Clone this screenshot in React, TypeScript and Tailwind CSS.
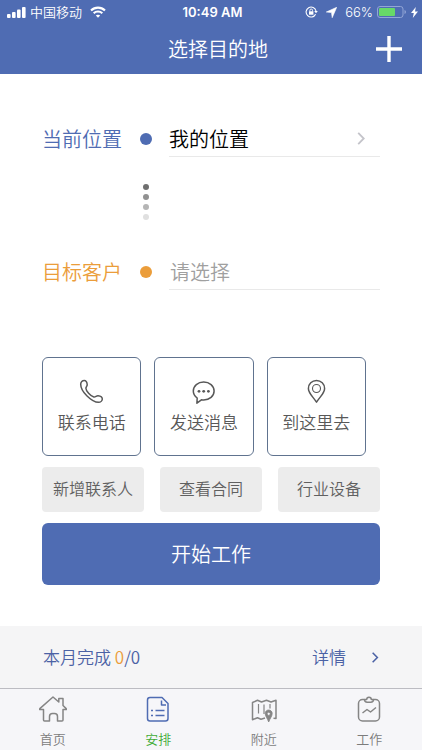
import React from "react";

function StatusBar() {
  return (
    <div className="grid h-6 grid-cols-[1fr_auto_1fr] items-center pl-[7px] pr-1 font-['Inter','Noto_Sans_CJK_SC',sans-serif] text-[13px] leading-6">
      <div className="flex items-center">
        <svg className="mr-1 h-3 w-[19px]" viewBox="0 0 19 12" fill="currentColor" aria-hidden="true">
          <rect x="0" y="8" width="3.6" height="4" rx="1" />
          <rect x="5" y="6" width="3.6" height="6" rx="1" />
          <rect x="10" y="3.5" width="3.6" height="8.5" rx="1" />
          <rect x="15" y="1" width="3.6" height="11" rx="1" />
        </svg>
        <span className="font-[350]">中国移动</span>
        <svg className="ml-2 h-3 w-4" viewBox="0 0 16 12" fill="none" stroke="currentColor" strokeWidth="2.1" aria-hidden="true">
          <path d="M1 4.6C5 .6 11 .6 15 4.6" />
          <path d="M3.7 7.3c2.4-2.4 6.2-2.4 8.6 0" />
          <path d="M5.8 9.6L8 11.8l2.2-2.2c-1.200-1.100-3.200-1.100-4.400 0z" fill="currentColor" stroke="none" />
        </svg>
      </div>
      <span className="font-semibold">10:49 AM</span>
      <div className="flex items-center justify-end">
        <svg className="mr-2 h-3 w-[13px]" viewBox="0 0 13 12" fill="none" stroke="currentColor" aria-hidden="true">
          <path d="M10.6 8.2A5 5 0 1 1 11 5" strokeWidth="1.1" />
          <path d="M9.2 5h3.6L11 7.2z" fill="currentColor" stroke="none" />
          <rect x="4" y="5.3" width="4.4" height="3.4" fill="currentColor" stroke="none" />
          <path d="M4.9 5.5V4.3a1.3 1.3 0 0 1 2.6 0v1.2" strokeWidth=".9" />
        </svg>
        <svg className="mr-2 h-[11px] w-[11px]" viewBox="0 0 11 11" fill="currentColor" stroke="currentColor" strokeWidth=".6" aria-hidden="true">
          <path d="M10.7.3L6.200 10.700 5.500 5.600.3 5z" />
        </svg>
        <span>66%</span>
        <svg className="ml-1 h-3 w-[30px]" viewBox="0 0 30 12" aria-hidden="true">
          <rect x=".5" y=".5" width="25.5" height="11" rx="2.5" fill="none" stroke="#93a6d6" />
          <rect x="2" y="2" width="16" height="8" rx="1" fill="#67d968" />
          <path d="M27.5 4v4c2-.8 2-3.200 0-4z" fill="#93a6d6" />
        </svg>
        <svg className="ml-1 h-[11px] w-[7px]" viewBox="0 0 7 11" fill="currentColor" aria-hidden="true">
          <path d="M4.8 0L0 6h2.8L1.8 11 7 4.6H4z" />
        </svg>
      </div>
    </div>
  );
}

function Chevron({ className }: { className: string }) {
  return (
    <svg className={className} viewBox="0 0 8 14" fill="none" stroke="currentColor" strokeWidth="2" aria-hidden="true">
      <path d="M1 1l6 6-6 6" />
    </svg>
  );
}

const phoneIcon = (
  <path d="M5.300 1.500C3.300 1.500 1.700 3 1.700 5.200c0 3.300 2.500 7.900 6.100 11.500 3.700 3.700 8.300 6.600 11.700 6.600 2.200 0 3.800-1.600 3.800-3.300 0-1.800-2.500-3-4.300-3.200-1.700-.1-2.500 1.600-4.200 1.200-1.500-.4-3.800-2.100-5.200-3.700-1.500-1.700-2.700-3.500-2.700-5 0-1.400 1.500-2 1.300-3.800-.2-1.700-1.200-4-2.900-4z" />
);

const messageIcon = (
  <>
    <path d="M12.700 3C6.900 3 2.300 6.900 2.300 12c0 2.800 1.500 5.300 3.900 7L5.900 24.200l4.500-3.400c.7.100 1.500.2 2.300.2 5.800 0 10.400-3.900 10.400-9s-4.600-9-10.400-9z" />
    <g fill="currentColor" stroke="none">
      <circle cx="8" cy="12.300" r="1.400" />
      <circle cx="12.700" cy="12.300" r="1.400" />
      <circle cx="17.400" cy="12.300" r="1.400" />
    </g>
  </>
);

const pinIcon = (
  <>
    <path d="M12.500 1.500c-4.600 0-8.100 3.500-8.100 7.900 0 4.800 4.600 8.300 8.100 13.800 3.500-5.500 8.100-9 8.100-13.800 0-4.400-3.500-7.900-8.100-7.900z" />
    <circle cx="12.500" cy="9.500" r="4" strokeWidth="1.100" />
  </>
);

const contactActions = [
  { label: "联系电话", icon: phoneIcon },
  { label: "发送消息", icon: messageIcon },
  { label: "到这里去", icon: pinIcon },
];

const shortcuts = ["新增联系人", "查看合同", "行业设备"];

const tabs = [
  {
    label: "首页",
    active: false,
    icon: (
      <path d="M4.500 14.500H1c-.6 0-.7-.5-.2-.9L14 2l5.800 5V3.500H24v7l3.200 3.100c.5.4.4.9-.2.900h-3V25c0 .6-.4 1-1 1h-4.500v-4.500c0-1.700-1.300-3-3-3h-2c-1.700 0-3 1.300-3 3V26h-5c-.6 0-1-.4-1-1z" />
    ),
  },
  {
    label: "安排",
    active: true,
    icon: (
      <>
        <path d="M6 2.500h12l6 6V23.500c0 1.400-1.100 2.500-2.500 2.500H6c-1.400 0-2.500-1.100-2.500-2.500V5c0-1.400 1.100-2.500 2.500-2.500z" />
        <path d="M17.500 5.500v4.500H22M11.500 15.500h9M11.500 20.500h9M7 15.500h2M7 20.500h2" />
      </>
    ),
  },
  {
    label: "附近",
    active: false,
    icon: (
      <>
        <path d="M15 23L11 24.200l-3.500-1.500-5 2V7.500L7.500 5.300l4 1.700 5-1.700 4.500 1.700 5-1.700v18.200l-2.500-.3" />
        <path d="M8.500 9v9.500M14 9.500V19M20 9v4.500" strokeWidth="1.200" />
        <path d="M18.700 15c-2 0-3.500 1.500-3.500 3.400 0 2.700 2.200 5 3.500 8.600 1.300-3.600 3.500-5.900 3.500-8.600 0-1.900-1.500-3.400-3.500-3.400zm0 2.200a1.600 1.600 0 1 1 0 3.200 1.600 1.600 0 0 1 0-3.200z" fill="currentColor" fillRule="evenodd" strokeWidth=".8" />
      </>
    ),
  },
  {
    label: "工作",
    active: false,
    icon: (
      <>
        <path d="M9.500 4.500H7.500c-2.200 0-4 1.800-4 4V22c0 2.200 1.800 4 4 4h13c2.200 0 4-1.800 4-4V8.500c0-2.200-1.800-4-4-4h-2" />
        <path d="M9.500 4.500h2.200a2.300 2.300 0 0 1 4.600 0h2.200c0 1.700-1 2.700-2.800 2.700h-3.400c-1.800 0-2.800-1-2.800-2.700z" />
        <path d="M7.500 18l4.500-3.500 3.500 2.500 5.500-4.500" />
      </>
    ),
  },
];

export default function App() {
  return (
    <div className="flex min-h-screen flex-col bg-white font-['Noto_Sans_CJK_SC',sans-serif] font-[350]">
      <header className="bg-[#4f6cb3] text-white">
        <StatusBar />
        <div className="flex h-[50px] items-center pl-15 pr-5">
          <h1 className="flex-1 text-center text-xl font-[350]">选择目的地</h1>
          <button type="button" aria-label="添加">
            <svg className="h-[26px] w-[26px]" viewBox="0 0 26 26" fill="none" stroke="currentColor" strokeWidth="3.4" aria-hidden="true">
              <path d="M13 0v26M0 13h26" />
            </svg>
          </button>
        </div>
      </header>

      <main className="flex-1 px-[42px] pb-10 pt-[47px]">
        <div className="flex h-9 items-center text-xl">
          <label htmlFor="origin" className="text-[#4f6cb3]">当前位置</label>
          <span className="ml-[18px] mr-[17px] h-3 w-3 rounded-full bg-[#4f6cb3]" />
          <button id="origin" type="button" className="flex h-full flex-1 items-center justify-between border-b border-[#e9e9e9] pr-[15px] text-black">
            我的位置
            <Chevron className="h-[13px] w-2 text-[#c4c4ca]" />
          </button>
        </div>
        <div className="my-[27px] ml-[101px] flex w-[6px] flex-col gap-1">
          <span className="h-[6px] rounded-full bg-[#6f6f6f]" />
          <span className="h-[6px] rounded-full bg-[#919191]" />
          <span className="h-[6px] rounded-full bg-[#b5b5b5]" />
          <span className="h-[6px] rounded-full bg-[#e0e0e0]" />
        </div>
        <div className="mt-[34px] flex h-9 items-center text-xl">
          <label htmlFor="customer" className="text-[#eb9d3a]">目标客户</label>
          <span className="ml-[18px] mr-[17px] h-3 w-3 rounded-full bg-[#eb9d3a]" />
          <input id="customer" type="text" placeholder="请选择" className="h-full w-0 flex-1 border-b border-[#e9e9e9] pl-px outline-none placeholder:text-[#a0a0a0]" />
        </div>

        <div className="mr-[14px] mt-[67px] grid grid-cols-3 gap-[13px]">
          {contactActions.map((action) => (
            <button key={action.label} type="button" className="flex h-[99px] flex-col items-center rounded-md border border-[#60738f] pt-[21px] text-[17px] leading-6 text-[#585858]">
              <svg className="mb-[6px] h-[25px] w-[25px]" viewBox="0 0 25 25" fill="none" stroke="currentColor" strokeWidth="1.5" strokeLinejoin="round" aria-hidden="true">
                {action.icon}
              </svg>
              {action.label}
            </button>
          ))}
        </div>
        <div className="mt-[11px] grid grid-cols-3 gap-4">
          {shortcuts.map((label) => (
            <button key={label} type="button" className="h-[45px] whitespace-nowrap rounded bg-[#ececec] pb-[3px] text-base leading-5 text-[#606060]">
              {label}
            </button>
          ))}
        </div>
        <button type="button" className="mt-[11px] h-[62px] w-full rounded-md bg-[#4f6cb3] text-xl text-white">
          开始工作
        </button>
      </main>

      <section className="flex h-[62px] items-center justify-between bg-[#f5f5f6] px-[43px] text-[17px] text-[#4b62a5]">
        <p>
          本月完成 <span className="text-[#eb9d3a]">0</span>/0
        </p>
        <a href="#details" className="flex items-center gap-[25px]">
          详情
          <Chevron className="h-[11px] w-2" />
        </a>
      </section>
      <nav className="grid grid-cols-4 border-t border-[#bcbcc2] bg-[#f6f6f9]">
        {tabs.map((tab) => (
          <a
            key={tab.label}
            href={`#${tab.label}`}
            aria-current={tab.active ? "page" : undefined}
            className={`flex h-[61px] flex-col items-center pt-[6px] text-[13px] leading-5 ${tab.active ? "text-[#3fab36]" : "text-[#7c7c7c]"}`}
          >
            <svg
              className={`mb-[6px] h-7 w-7 ${tab.active ? "text-[#4f6cb3]" : "text-[#858585]"}`}
              viewBox="0 0 28 28"
              fill="none"
              stroke="currentColor"
              strokeWidth="1.5"
              strokeLinejoin="round"
              aria-hidden="true"
            >
              {tab.icon}
            </svg>
            {tab.label}
          </a>
        ))}
      </nav>
    </div>
  );
}
